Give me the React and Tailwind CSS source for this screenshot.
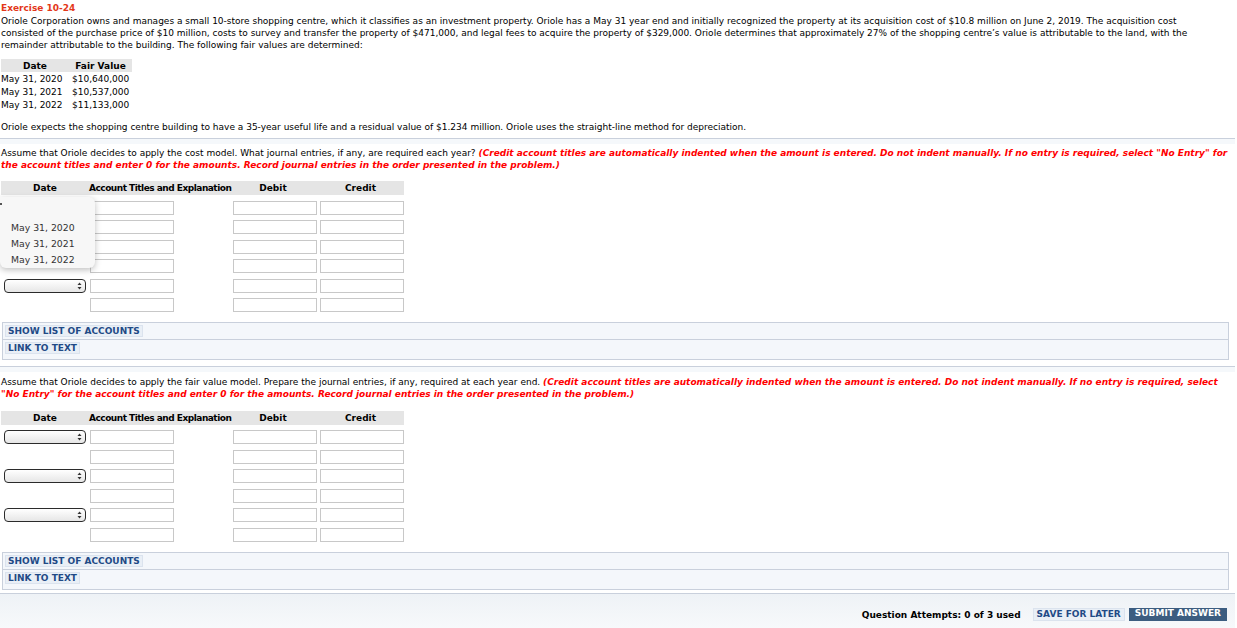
import React from 'react';

const FONT = "font-['DejaVu_Sans',Verdana,sans-serif]";

const fairValues = [
  { date: 'May 31, 2020', value: '$10,640,000' },
  { date: 'May 31, 2021', value: '$10,537,000' },
  { date: 'May 31, 2022', value: '$11,133,000' },
];

function Select() {
  return (
    <div className="ml-[3px] flex h-[14px] w-[82px] items-center justify-end rounded-[4px] border border-[#2b2b2b] bg-gradient-to-b from-white to-[#e6e6e6] pr-[3px]">
      <svg width="5" height="8" viewBox="0 0 5 8">
        <path d="M2.5 0.5 L4.5 3 L0.5 3 Z" fill="#333" />
        <path d="M2.5 7.5 L4.5 5 L0.5 5 Z" fill="#333" />
      </svg>
    </div>
  );
}

function Box({ className = '' }) {
  return <div className={`h-[14px] w-[84px] border border-[#c8c8c8] bg-white ${className}`} />;
}

function JournalRow({ withSelect }) {
  return (
    <div className="flex h-[14px] items-center">
      <div className="w-[88px]">{withSelect && <Select />}</div>
      <Box className="ml-[1px]" />
      <Box className="ml-[59px]" />
      <Box className="ml-[3px]" />
    </div>
  );
}

function JournalTable({ selects, gap, rowsTop }) {
  return (
    <div>
      <div className="flex h-[14px] w-[403px] items-center whitespace-nowrap bg-[#e5e5e5] font-bold">
        <div className="w-[88px] text-center">Date</div>
        <div className="w-[140px] text-left tracking-[-0.5px]">Account Titles and Explanation</div>
        <div className="w-[88px] text-center">Debit</div>
        <div className="w-[87px] text-center">Credit</div>
      </div>
      <div className={`flex flex-col ${rowsTop} ${gap}`}>
        {selects.map((s, i) => (
          <JournalRow key={i} withSelect={s} />
        ))}
      </div>
    </div>
  );
}

function LinksBox() {
  return (
    <div className="mr-[8px] ml-[2px] border border-[#c9d0dc] bg-[#f4f7fb]">
      <div className="h-[17px] border-b border-[#c9d0dc] px-[2px] pt-[2px]">
        <span className="inline-block border border-[#dbe3ee] bg-[#e9eff6] px-[2px] leading-[10px] font-bold text-[#1f4a86]">
          SHOW LIST OF ACCOUNTS
        </span>
      </div>
      <div className="h-[19px] px-[2px] pt-[2px]">
        <span className="inline-block border border-[#dbe3ee] bg-[#e9eff6] px-[2px] leading-[10px] font-bold text-[#1f4a86]">
          LINK TO TEXT
        </span>
      </div>
    </div>
  );
}

function Separator() {
  return <div className="mr-[2px] h-[6px] border-t border-[#c9d0dc] bg-[#f5f8fb]" />;
}

export default function App() {
  return (
    <div className={`${FONT} relative h-[628px] w-[1237px] overflow-hidden bg-white text-[9px] leading-[12px] text-black`}>
      <div className="px-[1px] pt-[2px]">
        <div className="font-bold text-[#e3371a]">Exercise 10-24</div>
        <p className="mt-[1px] max-w-[1215px]">
          Oriole Corporation owns and manages a small 10-store shopping centre, which it classifies as an investment
          property. Oriole has a May 31 year end and initially recognized the property at its acquisition cost of $10.8
          million on June 2, 2019. The acquisition cost consisted of the purchase price of $10 million, costs to survey
          and transfer the property of $471,000, and legal fees to acquire the property of $329,000. Oriole determines
          that approximately 27% of the shopping centre’s value is attributable to the land, with the remainder
          attributable to the building. The following fair values are determined:
        </p>

        <table className="mt-[8px] border-collapse whitespace-nowrap">
          <thead>
            <tr className="bg-[#e5e5e5]">
              <th className="h-[13px] w-[68px] px-0 text-center font-bold">Date</th>
              <th className="h-[13px] w-[63px] px-0 text-center font-bold">Fair Value</th>
            </tr>
          </thead>
          <tbody>
            {fairValues.map((r) => (
              <tr key={r.date}>
                <td className="h-[13px] pr-[3px]">{r.date}</td>
                <td className="h-[13px] pl-[3px]">{r.value}</td>
              </tr>
            ))}
          </tbody>
        </table>

        <p className="mt-[10px] mb-[5px]">
          Oriole expects the shopping centre building to have a 35-year useful life and a residual value of $1.234
          million. Oriole uses the straight-line method for depreciation.
        </p>
      </div>

      <Separator />

      {/* Cost model */}
      <div className="px-[1px] pt-[3px]">
        <p>
          Assume that Oriole decides to apply the cost model. What journal entries, if any, are required each year?{' '}
          <span className="font-bold italic text-[#ff0000]">
            (Credit account titles are automatically indented when the amount is entered. Do not indent manually. If
            no entry is required, select "No Entry" for the account titles and enter 0 for the amounts. Record journal
            entries in the order presented in the problem.)
          </span>
        </p>
        <div className="mt-[10px]">
          <JournalTable selects={[false, false, false, false, true, false]} gap="gap-[5.4px]" rowsTop="mt-[6px]" />
        </div>
      </div>
      <div className="mt-[10px]">
        <LinksBox />
      </div>
      <div className="mt-[6px]">
        <Separator />
      </div>

      {/* Fair value model */}
      <div className="px-[1px] pt-[4px]">
        <p>
          Assume that Oriole decides to apply the fair value model. Prepare the journal entries, if any, required at
          each year end.{' '}
          <span className="font-bold italic text-[#ff0000]">
            (Credit account titles are automatically indented when the amount is entered. Do not indent manually. If
            no entry is required, select "No Entry" for the account titles and enter 0 for the amounts. Record journal
            entries in the order presented in the problem.)
          </span>
        </p>
        <div className="mt-[11px]">
          <JournalTable selects={[true, false, true, false, true, false]} gap="gap-[5.6px]" rowsTop="mt-[5px]" />
        </div>
      </div>
      <div className="mt-[10px]">
        <LinksBox />
      </div>

      {/* Footer */}
      <div className="mt-[3px] mr-[2px] flex h-[36px] items-end justify-end gap-[12px] border-t border-[#c9d0dc] bg-gradient-to-b from-[#eef2f6] to-[#f7f9fb] pr-[8px] pb-[8px]">
        <span className="font-bold">Question Attempts: 0 of 3 used</span>
        <div className="flex gap-[4px]">
          <span className="border border-[#dbe3ee] bg-[#e9eff6] px-[3px] leading-[11px] font-bold text-[#1f4a86]">
            SAVE FOR LATER
          </span>
          <span className="bg-[#3c5d80] px-[6px] leading-[11px] font-bold text-white">SUBMIT ANSWER</span>
        </div>
      </div>

      {/* Open date dropdown */}
      <div className="absolute top-[197px] left-0 h-[71px] w-[95px] rounded-r-[6px] rounded-bl-[6px] bg-[#f7f7f7] shadow-[0_2px_6px_rgba(0,0,0,0.25)]">
        <div className="absolute top-[6px] left-0 h-[2px] w-[2px] bg-[#555]" />
        <div className="flex flex-col pt-[23px] pl-[11px] text-[9.3px] leading-[16px] text-[#333]">
          <span>May 31, 2020</span>
          <span>May 31, 2021</span>
          <span>May 31, 2022</span>
        </div>
      </div>
    </div>
  );
}
